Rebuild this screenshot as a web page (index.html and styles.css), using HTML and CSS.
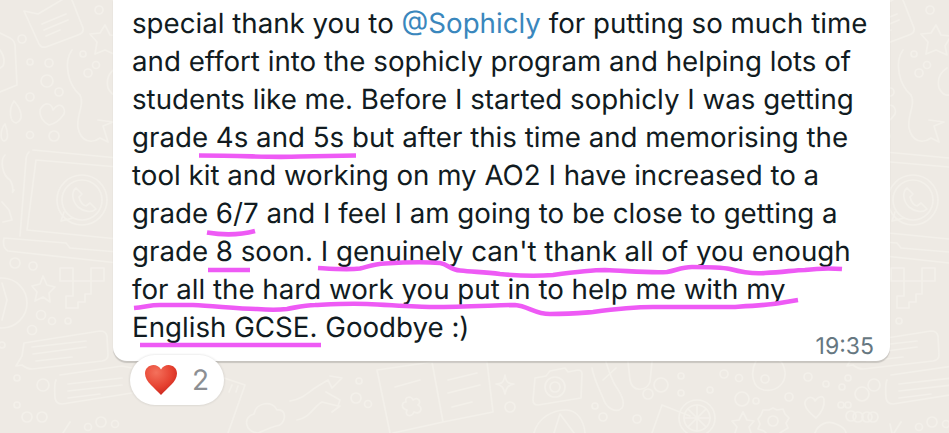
FILE: index.html
```html
<!DOCTYPE html>
<html lang="en">
<head>
<meta charset="utf-8">
<title>Message</title>
<link rel="stylesheet" href="styles.css">
</head>
<body>
<svg class="wallpaper" viewBox="0 0 949 433" fill="none" stroke="#f3f0ea" stroke-width="1.7" stroke-linecap="round" stroke-linejoin="round">
  <defs>
    <g id="edge">
      <path d="M24 11L38 14 70-5 83 28Q84 33 78 35L46 47Q41 48 39 44Z"/>
      <path d="M42 24L66 14M44 30L68 20M46 36L60 30"/>
      <path d="M0 33L10 38Q14 40 15 45L17 85 0 92M0 50Q6 58 3 66L0 68"/>
      <circle cx="22" cy="39" r="4"/><circle cx="30" cy="62" r="3"/><circle cx="49" cy="63" r="4"/><circle cx="47" cy="81" r="6"/><circle cx="59" cy="92" r="4"/><circle cx="30" cy="97" r="4"/><circle cx="99" cy="10" r="4"/><circle cx="83" cy="54" r="3"/><circle cx="88" cy="73" r="4"/><circle cx="96" cy="65" r="3.500"/>
      <path d="M72 50C63 62 68 85 80 95 85 105 76 115 78 128 81 142 92 144 100 138L108 142 103 126 113 122 98 120"/>
      <path d="M105 25L110 35 120 36 114 46 116 55 105 50 95 54 97 42 90 34 100 33Z"/>
      <path d="M116 68Q105 75 108 88 114 100 124 92"/>
      <path d="M40 110C45 100 52 104 53 110 60 100 66 108 64 114 60 120 54 124 49 125 43 122 39 116 40 110Z"/>
      <path d="M14 101C8 110 10 122 16 123 24 120 22 110 14 101ZM5 124C0 130 0 140 4 141 9 140 8 132 5 124Z"/>
      <circle cx="30" cy="135" r="3.500"/><circle cx="54" cy="136" r="5"/>
      <path d="M5 155C0 160 2 175 10 180 16 190 10 196 14 190"/>
      <path d="M2 202L9 210 12 220 3 222"/>
      <path d="M33 150L118 158M29 152Q26 155 26 160L20 236M36 160L118 167M36 160L27 230 118 239"/>
      <path d="M4 238L66 243 70 248 118 252M4 238Q2 248 8 251L118 263"/>
      <circle cx="82" cy="200" r="25"/><circle cx="82" cy="200" r="20"/>
      <path d="M61 221L73 218M61 221L64 212"/>
      <path d="M76 188C71 192 72 201 78 207 84 212 92 213 96 209L90 203 86 206C82 205 80 201 79 197L82 194Z"/>
      <circle cx="15" cy="263" r="5"/><circle cx="33" cy="266" r="4"/>
      <circle cx="2" cy="303" r="25"/><path d="M2 283L7 300 2 320"/>
      <path d="M43 276L47 285 55 287 49 293 50 302 43 297 35 301 37 292 32 286 40 284Z"/>
      <path d="M60 268H73V281H60ZM91 268H104V281H91ZM73 281H91V294H85V302H78V308H66V296H73Z"/>
      <circle cx="41" cy="315" r="4.500"/><circle cx="52" cy="321" r="3.500"/><circle cx="68" cy="321" r="3"/><circle cx="32" cy="330" r="4.500"/>
      <path d="M24 343L100 331Q106 331 107 336L108 355Q108 360 102 361L32 369Q27 369 22 365L16 366 22 356Z"/>
      <path d="M32 347L86 341M33 354L86 347M36 361L72 357"/>
      <circle cx="2" cy="345" r="3"/><circle cx="17" cy="378" r="3"/><circle cx="17" cy="405" r="3"/><circle cx="27" cy="417" r="5"/><circle cx="42" cy="417" r="5"/><circle cx="43" cy="385" r="6"/>
      <path d="M60 375L122 366 132 368M56 380Q54 384 55 398 56 404 62 404L132 393"/>
      <path d="M68 384L122 378M68 391L122 385M68 398L100 394"/>
      <circle cx="88" cy="427" r="3.500"/><circle cx="101" cy="422" r="5"/><circle cx="115" cy="424" r="3.500"/>
      <path d="M63 433L70 422"/>
    </g>
  </defs>
  <use href="#edge"/>
  <use href="#edge" x="831"/>
  <path d="M224 378L245 385 228 433M232 385L229 392M238 386L236 392"/>
  <path d="M258 433C244 432 243 416 254 414 256 402 273 400 277 410 288 408 286 426 276 426 268 428 262 432 258 433Z"/>
  <path d="M290 401C305 398 308 392 318 386L328 380 332 388 342 378 330 376M297 420C310 418 314 406 322 402L338 406 340 400 326 392M340 406L332 412"/>
  <circle cx="356" cy="398" r="5"/><circle cx="368" cy="404" r="3.500"/><circle cx="359" cy="381" r="3"/>
  <path d="M377 370L432 362 443 422 393 433M377 370L390 433M432 362L487 362 493 412 443 422 432 362"/>
  <path d="M395 387L420 380M448 380L477 373M448 393L480 385M452 407L472 402"/>
  <path d="M406 402C404 396 412 396 413 400 418 396 422 402 418 405 424 408 420 415 414 412 412 418 404 416 407 410 400 408 402 402 406 402Z"/>
  <path d="M505 375C506 382 508 384 514 384 508 385 506 388 505 394 504 388 502 385 496 384 502 384 504 382 505 375Z"/>
  <circle cx="510" cy="407" r="5"/>
  <path d="M535 378L546 376 550 371 565 368 568 372 578 370Q582 370 582 374L581 398 538 405Q533 405 533 400Z"/>
  <circle cx="555" cy="387" r="10"/><circle cx="555" cy="387" r="5"/>
  <path d="M534 433C538 418 552 410 566 410 578 410 584 422 585 433"/>
  <path d="M554 433L560 414 574 433"/>
  <path d="M592 368C594 380 600 390 603 398 606 408 616 414 622 408 626 402 620 392 615 385 610 376 608 368 606 362"/>
  <path d="M603 380L616 368"/>
  <path d="M628 362L630 380C632 392 646 392 650 382L652 362"/>
  <circle cx="661" cy="385" r="7"/><circle cx="648" cy="394" r="5"/><circle cx="681" cy="376" r="3"/><circle cx="681" cy="393" r="3"/><circle cx="710" cy="390" r="3"/><circle cx="724" cy="374" r="4"/><circle cx="739" cy="378" r="3.500"/><circle cx="742" cy="399" r="7"/><circle cx="756" cy="401" r="3"/><circle cx="789" cy="397" r="4"/><circle cx="808" cy="377" r="4"/><circle cx="826" cy="384" r="3"/><circle cx="842" cy="387" r="3"/><circle cx="862" cy="394" r="7"/><circle cx="841" cy="405" r="3"/><circle cx="851" cy="416" r="5"/><circle cx="867" cy="417" r="5"/><circle cx="595" cy="406" r="3"/><circle cx="603" cy="417" r="4"/><circle cx="637" cy="419" r="4"/>
  <path d="M662 405L652 433M662 405L690 416"/>
  <circle cx="697" cy="418" r="18"/><circle cx="697" cy="418" r="13"/><path d="M684 418H710M697 405V431M688 409L706 427M706 409L688 427"/>
  <path d="M756 361C750 372 752 388 764 390 778 392 786 382 785 372 784 366 782 362 780 361"/>
  <circle cx="765" cy="379" r="4"/>
  <path d="M816 418C806 410 803 404 806 400 809 396 814 397 815 401 818 396 824 395 824 400 825 408 820 414 816 418Z"/>
  <circle cx="773" cy="421" r="5"/>
  <path d="M773 408L777 410 783 409 785 414 789 418 786 423 788 428 783 431 780 433M773 408L769 410 763 410 761 415 758 419 760 424 758 429 764 431 766 433"/>
  <path d="M743 412L747 420 754 421 749 427 751 433M743 412L739 420 732 421 737 427 735 433"/>
  <path d="M815 433C818 424 828 420 836 424 842 426 846 430 846 433"/>
  <path d="M892 433L890 424"/>
</svg>
<main class="chat">
  <article class="bubble">
    <p class="text"><span class="line">special thank you to <a class="mention">@Sophicly</a> for putting so much time</span>
<span class="line">and effort into the sophicly program and helping lots of</span>
<span class="line">students like me. Before I started sophicly I was getting</span>
<span class="line">grade 4s and 5s but after this time and memorising the</span>
<span class="line">tool kit and working on my AO2 I have increased to a</span>
<span class="line">grade 6/7 and I feel I am going to be close to getting a</span>
<span class="line">grade 8 soon. I genuinely can't thank all of you enough</span>
<span class="line">for all the hard work you put in to help me with my</span>
<span class="line">English GCSE. Goodbye :)</span></p>
    <time class="time">19:35</time>
  </article>
  <div class="reaction">
    <svg class="heart" viewBox="0 0 32 30"><defs><radialGradient id="h" cx=".35" cy=".25" r=".85"><stop offset="0" stop-color="#f4715c"/><stop offset=".6" stop-color="#e5402f"/><stop offset="1" stop-color="#c3201a"/></radialGradient></defs><path d="M16 30C10 23 0 17 0 8.500 0 3.500 4 0 8.500 0 11.500 0 14.500 1.500 16 4.500 17.500 1.500 20.500 0 23.500 0 28 0 32 3.500 32 8.500 32 17 22 23 16 30z" fill="url(#h)"/></svg>
    <span class="count">2</span>
  </div>
</main>
<svg class="marks" viewBox="0 0 949 433" fill="none" stroke="#ee5af5" stroke-width="4.600">
  <path d="M199 155.500C250 155.500 270 158 300 156.500L356 155.500"/>
  <path d="M207 232.500C222 235 240 235 255 231"/>
  <path d="M208 270H250"/>
  <path d="M318 268C335 269 348 270 360 268.500 370 266 375 264 385 263.500 400 262.500 428 262 440 263 448 264 450 270 460 270.500 475 272 485 272 500 274 520 276 540 276 553 275 575 272 590 270 605 270 630 271 650 273 667 272 677 270 682 267 692 267 710 267 720 267 730 269 745 273 755 274 765 273 785 272 795 270 805 270 820 268 830 268 842 269"/>
  <path d="M134 308C145 307 150 305 160 305 170 305 180 305 193 305 215 306 240 309 257 309 270 310 278 310 287 309 298 307 305 305 315 305 335 304 350 303 367 304 390 305 415 307 433 307 465 307 500 305 515 305 528 306 535 314 550 314 570 314 580 313 593 312 615 309 635 307 653 307 680 307 710 307 733 307 750 306 770 305 780 303L798 300"/>
  <path d="M140 345H321"/>
</svg>
</body>
</html>
```
FILE: styles.css
```css
html, body { margin: 0; height: 100%; }
body {
  position: relative;
  width: 949px;
  height: 433px;
  overflow: hidden;
  background: #eeeae4;
  font-family: Inter, "Liberation Sans", sans-serif;
  text-rendering: geometricPrecision;
}
.wallpaper { position: absolute; inset: 0; width: 949px; height: 433px; }
.chat { position: relative; display: flex; flex-direction: column; align-items: flex-start; padding-left: 113px; }
.bubble {
  box-sizing: border-box;
  width: 777px;
  height: 361px;
  padding: 4px 16px 0 19px;
  background: #fff;
  border-radius: 0 0 14px 14px;
  box-shadow: 0 1.500px 1px rgba(0,0,0,.16);
  display: flex;
  flex-direction: column;
}
.text { margin: 0; font-size: 27.700px; line-height: 38px; color: #111b21; }
.line { display: block; white-space: nowrap; }
.mention { color: #3a87bd; }
.time { align-self: flex-end; margin-top: -14px; font-size: 23px; line-height: 28px; color: #667781; }
.reaction {
  display: flex;
  align-items: center;
  gap: 15px;
  margin: -6px 0 0 17px;
  padding: 0 16px 0 15px;
  width: 94px;
  height: 50px;
  box-sizing: border-box;
  background: #fff;
  border-radius: 25px;
  box-shadow: 0 0 2px 1px rgba(0,0,0,.07);
  position: relative;
}
.heart { width: 32px; height: 30px; flex: none; }
.count { font-size: 28px; color: #8c8f93; }
.marks { position: absolute; inset: 0; width: 949px; height: 433px; pointer-events: none; }
```
